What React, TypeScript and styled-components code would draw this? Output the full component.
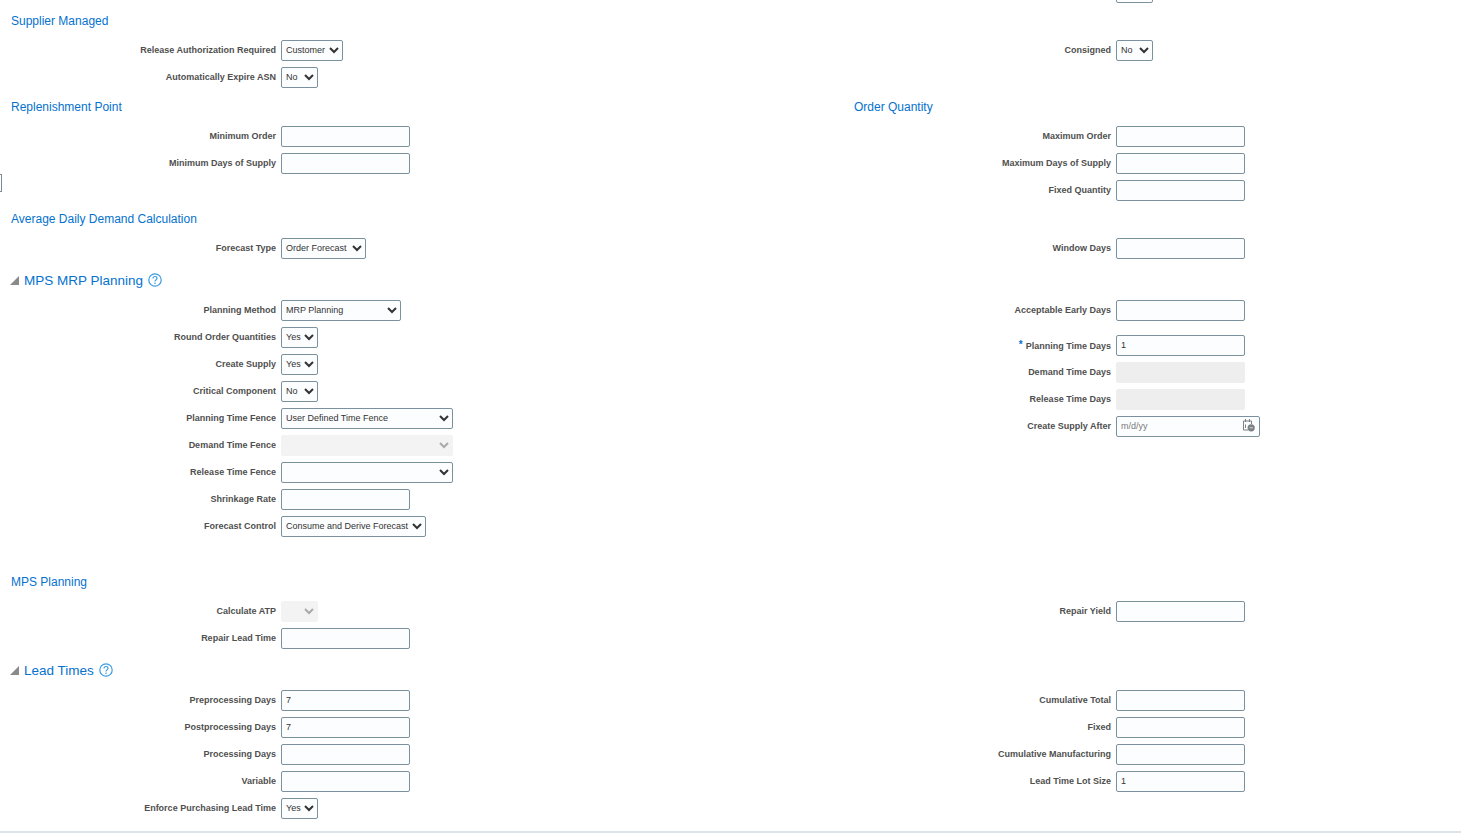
import React from "react";
import styled, { createGlobalStyle } from "styled-components";

const GlobalStyle = createGlobalStyle`
  html, body {
    margin: 0;
    padding: 0;
    background: #fff;
  }
  body {
    font-family: "Liberation Sans", Arial, sans-serif;
  }
`;

const Page = styled.div`
  position: relative;
  width: 1461px;
  height: 833px;
  overflow: hidden;
  box-sizing: border-box;
  border-bottom: 2px solid #dfe4ea;
`;

const Content = styled.div`
  margin-top: -18px;
`;

const TopStub = styled.div`
  height: 21px;
  margin-left: 1116px;
  width: 37px;
  box-sizing: border-box;
  border: 1px solid #7b929e;
  border-radius: 2px;
`;

const SplitterHandle = styled.div`
  position: absolute;
  left: -1px;
  top: 174px;
  width: 3px;
  height: 18px;
  box-sizing: border-box;
  border: 1px solid #7b8a94;
`;

const Columns = styled.div`
  display: grid;
  grid-template-columns: 843px 618px;
  margin-top: ${(p: { $top?: number }) => p.$top ?? 0}px;
`;

const Column = styled.div`
  min-width: 0;
`;

const SubHeading = styled.h3<{ $inset?: number; $top?: number }>`
  margin: ${(p) => p.$top ?? 0}px 0 0 ${(p) => p.$inset ?? 11}px;
  height: 20px;
  line-height: 20px;
  font-size: 12px;
  font-weight: 400;
  color: #0572ce;
`;

const Heading = styled.h2<{ $top?: number }>`
  display: flex;
  align-items: center;
  margin: ${(p) => p.$top ?? 0}px 0 0 10px;
  height: 20px;
  font-size: 13.5px;
  font-weight: 400;
  color: #0572ce;
`;

const Disclosure = styled.svg`
  width: 9px;
  height: 9px;
  margin-right: 5px;
  flex: none;
`;

const HelpIcon = styled.svg`
  width: 14px;
  height: 14px;
  margin-left: 5px;
  flex: none;
`;

const Fields = styled.div<{ $top?: number }>`
  display: flex;
  flex-direction: column;
  gap: 6px;
  margin-top: ${(p) => p.$top ?? 9}px;
`;

const Row = styled.div<{ $label: number; $gapBelow?: number }>`
  display: grid;
  grid-template-columns: ${(p) => p.$label}px 1fr;
  column-gap: 5px;
  align-items: center;
  height: 21px;
  margin-bottom: ${(p) => p.$gapBelow ?? 0}px;
`;

const Label = styled.label`
  padding-bottom: 2px;
  text-align: right;
  white-space: nowrap;
  font-size: 9px;
  font-weight: 700;
  color: #4f4f4f;
`;

const Required = styled.span`
  color: #0572ce;
  font-size: 10px;
  margin-right: 3px;
  vertical-align: 1px;
`;

const TextInput = styled.input<{ $width?: number }>`
  display: block;
  box-sizing: border-box;
  width: ${(p) => p.$width ?? 129}px;
  height: 21px;
  padding: 0 4px 2px;
  border: 1px solid #7b929e;
  border-radius: 2px;
  outline: none;
  background: #fcfdfe;
  font: 400 9px "Liberation Sans", Arial, sans-serif;
  color: #333;

  &:disabled {
    border-color: #eeeeef;
    background: #eeeeef;
  }
  &::placeholder {
    color: #7a7a7a;
    opacity: 1;
  }
`;

const Select = styled.select<{ $width: number }>`
  display: block;
  box-sizing: border-box;
  width: ${(p) => p.$width}px;
  height: 21px;
  padding: 0 0 2px;
  border: 1px solid #7b929e;
  border-radius: 2px;
  outline: none;
  background-color: #fcfdfe;
  font: 400 9px "Liberation Sans", Arial, sans-serif;
  color: #333;

  &:disabled {
    border-color: #f3f3f4;
    background-color: #f3f3f4;
    opacity: 1;
    color: #aaa;
  }
`;

const DateField = styled.div`
  position: relative;
  width: 144px;
`;

const CalendarIcon = styled.svg`
  position: absolute;
  right: 5px;
  top: 2px;
  width: 13px;
  height: 14px;
`;

function Field({
  label,
  width,
  required,
  gapBelow,
  children,
}: {
  label: string;
  width: number;
  required?: boolean;
  gapBelow?: number;
  children: React.ReactNode;
}) {
  return (
    <Row $label={width} $gapBelow={gapBelow}>
      <Label>
        {required && <Required>*</Required>}
        {label}
      </Label>
      {children}
    </Row>
  );
}

function Drop({ width, value, disabled }: { width: number; value?: string; disabled?: boolean }) {
  return (
    <Select $width={width} disabled={disabled} defaultValue={value ?? ""}>
      <option value={value ?? ""}>{value ?? ""}</option>
    </Select>
  );
}

function Help() {
  return (
    <HelpIcon viewBox="0 0 14 14" fill="none">
      <circle cx="7" cy="7" r="6.2" stroke="#3d9be0" strokeWidth="1.2" />
      <path
        d="M5 5.4C5 4.2 5.9 3.5 7 3.5s2 .7 2 1.8c0 1.5-2 1.6-2 3.2"
        stroke="#3d9be0"
        strokeWidth="1.2"
      />
      <circle cx="7" cy="10.3" r=".8" fill="#3d9be0" />
    </HelpIcon>
  );
}

function Triangle() {
  return (
    <Disclosure viewBox="0 0 9 9">
      <path d="M9 0V9H0Z" fill="#8a8a8a" />
    </Disclosure>
  );
}

const L = 276;
const R = 268;

export default function App() {
  return (
    <Page>
      <GlobalStyle />
      <SplitterHandle />
      <Content>
        <TopStub />
        <SubHeading $top={8}>Supplier Managed</SubHeading>
        <Columns $top={9}>
          <Column>
            <Fields $top={0}>
              <Field label="Release Authorization Required" width={L}>
                <Drop width={62} value="Customer" />
              </Field>
              <Field label="Automatically Expire ASN" width={L}>
                <Drop width={37} value="No" />
              </Field>
            </Fields>
          </Column>
          <Column>
            <Fields $top={0}>
              <Field label="Consigned" width={R}>
                <Drop width={37} value="No" />
              </Field>
            </Fields>
          </Column>
        </Columns>

        <Columns $top={9}>
          <Column>
            <SubHeading>Replenishment Point</SubHeading>
            <Fields>
              <Field label="Minimum Order" width={L}>
                <TextInput />
              </Field>
              <Field label="Minimum Days of Supply" width={L}>
                <TextInput />
              </Field>
            </Fields>
          </Column>
          <Column>
            <SubHeading $inset={11}>Order Quantity</SubHeading>
            <Fields>
              <Field label="Maximum Order" width={R}>
                <TextInput />
              </Field>
              <Field label="Maximum Days of Supply" width={R}>
                <TextInput />
              </Field>
              <Field label="Fixed Quantity" width={R}>
                <TextInput />
              </Field>
            </Fields>
          </Column>
        </Columns>

        <SubHeading $top={8}>Average Daily Demand Calculation</SubHeading>
        <Columns $top={9}>
          <Column>
            <Fields $top={0}>
              <Field label="Forecast Type" width={L}>
                <Drop width={85} value="Order Forecast" />
              </Field>
            </Fields>
          </Column>
          <Column>
            <Fields $top={0}>
              <Field label="Window Days" width={R}>
                <TextInput />
              </Field>
            </Fields>
          </Column>
        </Columns>

        <Heading $top={11}>
          <Triangle />
          MPS MRP Planning
          <Help />
        </Heading>
        <Columns $top={10}>
          <Column>
            <Fields $top={0}>
              <Field label="Planning Method" width={L}>
                <Drop width={120} value="MRP Planning" />
              </Field>
              <Field label="Round Order Quantities" width={L}>
                <Drop width={37} value="Yes" />
              </Field>
              <Field label="Create Supply" width={L}>
                <Drop width={37} value="Yes" />
              </Field>
              <Field label="Critical Component" width={L}>
                <Drop width={37} value="No" />
              </Field>
              <Field label="Planning Time Fence" width={L}>
                <Drop width={172} value="User Defined Time Fence" />
              </Field>
              <Field label="Demand Time Fence" width={L}>
                <Drop width={172} disabled />
              </Field>
              <Field label="Release Time Fence" width={L}>
                <Drop width={172} />
              </Field>
              <Field label="Shrinkage Rate" width={L}>
                <TextInput />
              </Field>
              <Field label="Forecast Control" width={L}>
                <Drop width={145} value="Consume and Derive Forecast" />
              </Field>
            </Fields>
          </Column>
          <Column>
            <Fields $top={0}>
              <Field label="Acceptable Early Days" width={R} gapBelow={8}>
                <TextInput />
              </Field>
              <Field label="Planning Time Days" width={R} required>
                <TextInput defaultValue="1" />
              </Field>
              <Field label="Demand Time Days" width={R}>
                <TextInput disabled />
              </Field>
              <Field label="Release Time Days" width={R}>
                <TextInput disabled />
              </Field>
              <Field label="Create Supply After" width={R}>
                <DateField>
                  <TextInput $width={144} placeholder="m/d/yy" />
                  <CalendarIcon viewBox="0 0 13 14" fill="none">
                    <path d="M1.5 3H9.5V6M1.5 3V12H6" stroke="#7b8084" strokeWidth="1" />
                    <path d="M3.5 1V4M7.5 1V4" stroke="#7b8084" strokeWidth="1" />
                    <path d="M3.5 6.5V10" stroke="#7b8084" strokeWidth="1" />
                    <circle cx="9.2" cy="9.8" r="3.6" fill="#7b8084" />
                    <path d="M7.5 9.8H11" stroke="#e8eaec" strokeWidth="0.8" />
                  </CalendarIcon>
                </DateField>
              </Field>
            </Fields>
          </Column>
        </Columns>

        <SubHeading $top={35}>MPS Planning</SubHeading>
        <Columns $top={9}>
          <Column>
            <Fields $top={0}>
              <Field label="Calculate ATP" width={L}>
                <Drop width={37} disabled />
              </Field>
              <Field label="Repair Lead Time" width={L}>
                <TextInput />
              </Field>
            </Fields>
          </Column>
          <Column>
            <Fields $top={0}>
              <Field label="Repair Yield" width={R}>
                <TextInput />
              </Field>
            </Fields>
          </Column>
        </Columns>

        <Heading $top={11}>
          <Triangle />
          Lead Times
          <Help />
        </Heading>
        <Columns $top={10}>
          <Column>
            <Fields $top={0}>
              <Field label="Preprocessing Days" width={L}>
                <TextInput defaultValue="7" />
              </Field>
              <Field label="Postprocessing Days" width={L}>
                <TextInput defaultValue="7" />
              </Field>
              <Field label="Processing Days" width={L}>
                <TextInput />
              </Field>
              <Field label="Variable" width={L}>
                <TextInput />
              </Field>
              <Field label="Enforce Purchasing Lead Time" width={L}>
                <Drop width={37} value="Yes" />
              </Field>
            </Fields>
          </Column>
          <Column>
            <Fields $top={0}>
              <Field label="Cumulative Total" width={R}>
                <TextInput />
              </Field>
              <Field label="Fixed" width={R}>
                <TextInput />
              </Field>
              <Field label="Cumulative Manufacturing" width={R}>
                <TextInput />
              </Field>
              <Field label="Lead Time Lot Size" width={R}>
                <TextInput defaultValue="1" />
              </Field>
            </Fields>
          </Column>
        </Columns>
      </Content>
    </Page>
  );
}
